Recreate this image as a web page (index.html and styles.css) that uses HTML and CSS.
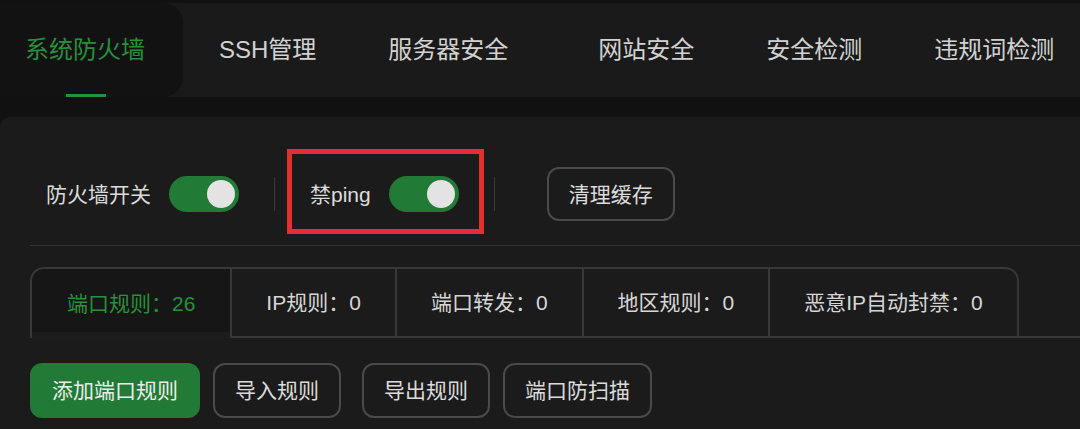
FILE: index.html
```html
<!DOCTYPE html>
<html lang="zh-CN">
<head>
<meta charset="utf-8">
<title>系统防火墙</title>
<link rel="stylesheet" href="styles.css">
</head>
<body>
<div class="page">
  <nav class="topnav">
    <div class="nav-list">
      <a class="nav-item active">系统防火墙</a>
      <a class="nav-item">SSH管理</a>
      <a class="nav-item">服务器安全</a>
      <a class="nav-item nav-item-spaced">网站安全</a>
      <a class="nav-item">安全检测</a>
      <a class="nav-item">违规词检测</a>
    </div>
  </nav>
  <main class="panel">
    <div class="switch-row">
      <div class="switch-group">
        <span class="switch-label">防火墙开关</span>
        <span class="toggle on"><span class="knob"></span></span>
      </div>
      <span class="sep"></span>
      <div class="switch-group highlighted">
        <span class="switch-label">禁ping</span>
        <span class="toggle on"><span class="knob"></span></span>
      </div>
      <span class="sep"></span>
      <button class="btn btn-cache">清理缓存</button>
    </div>

    <div class="tabs">
      <div class="tab active">端口规则：26</div>
      <div class="tab">IP规则：0</div>
      <div class="tab">端口转发：0</div>
      <div class="tab">地区规则：0</div>
      <div class="tab tab-last">恶意IP自动封禁：0</div>
      <div class="tabs-fill"></div>
    </div>

    <div class="actions">
      <button class="btn btn-primary">添加端口规则</button>
      <button class="btn">导入规则</button>
      <button class="btn btn-spaced">导出规则</button>
      <button class="btn">端口防扫描</button>
    </div>
  </main>
</div>
</body>
</html>
```

FILE: styles.css
```css
html, body {
  margin: 0;
  padding: 0;
  background: #111111;
}

body {
  width: 1080px;
  height: 429px;
  overflow: hidden;
  font-family: "Liberation Sans", "Noto Sans CJK SC", sans-serif;
  color: #d8d8d8;
}

.page {
  padding-top: 3px;
}

/* ---------- top navigation ---------- */
.topnav {
  height: 94px;
  background: #1a1a1a;
  overflow: hidden;
}

.nav-list {
  display: flex;
  height: 100%;
  margin-left: -11px;
}

.nav-item {
  position: relative;
  display: flex;
  align-items: center;
  padding: 0 36px;
  font-size: 24px;
  line-height: 1;
  color: #d2d2d2;
  white-space: nowrap;
}

.nav-item-spaced {
  margin-left: 18px;
}

.nav-item.active {
  background: #121212;
  color: #28903c;
  padding-right: 38px;
  border-radius: 0 20px 20px 0;
}

.nav-item.active::after {
  content: "";
  position: absolute;
  left: 50%;
  bottom: 0;
  width: 40px;
  height: 3px;
  margin-left: -20px;
  background: #28903c;
}

/* ---------- panel ---------- */
.panel {
  margin-top: 20px;
  min-height: 262px;
  background: #1b1b1b;
  border-top-left-radius: 10px;
  padding: 50px 0 0 30px;
}

.switch-row {
  display: flex;
  align-items: center;
  height: 54px;
  padding: 0 0 24px 16px;
  gap: 35px;
  border-bottom: 1px solid #363636;
}

.switch-group {
  position: relative;
  display: flex;
  align-items: center;
  gap: 18px;
}

.switch-label {
  font-size: 21px;
  line-height: 1;
  color: #dcdcdc;
  white-space: nowrap;
}

.highlighted::after {
  content: "";
  position: absolute;
  top: -27px;
  bottom: -22px;
  left: -23px;
  right: -25px;
  border: 5px solid #e2302a;
  pointer-events: none;
}

.toggle {
  display: flex;
  align-items: center;
  box-sizing: border-box;
  width: 70px;
  height: 36px;
  padding: 0 4px;
  border-radius: 18px;
  background: #555;
}

.toggle.on {
  background: #217a35;
  justify-content: flex-end;
}

.knob {
  width: 28px;
  height: 28px;
  border-radius: 50%;
  background: #e3e3e3;
}

.sep {
  width: 1px;
  height: 34px;
  background: #3a3a3a;
}

/* ---------- buttons ---------- */
.btn {
  box-sizing: border-box;
  height: 55px;
  padding: 0 20px;
  border: 2px solid #4a4a4a;
  border-radius: 12px;
  background: transparent;
  color: #dcdcdc;
  font-family: inherit;
  font-size: 21px;
  line-height: 1;
  white-space: nowrap;
}

.btn-cache {
  height: 54px;
  margin-left: 17px;
}

.btn-primary {
  background: #217a35;
  border-color: #217a35;
  color: #ececec;
}

.btn-spaced {
  margin-left: 8px;
}

/* ---------- tabs ---------- */
.tabs {
  display: flex;
  height: 71px;
  margin-top: 21px;
}

.tab {
  display: flex;
  align-items: center;
  box-sizing: border-box;
  padding: 0 34px;
  font-size: 21px;
  line-height: 1;
  color: #d6d6d6;
  white-space: nowrap;
  border-top: 2px solid #383838;
  border-right: 2px solid #383838;
  border-bottom: 2px solid #383838;
}

.tab:first-child {
  padding: 0 35px;
  border-left: 2px solid #383838;
  border-top-left-radius: 14px;
}

.tab.active {
  border-bottom: none;
  color: #28903c;
  background: linear-gradient(#161616 calc(100% - 6px), #1c1c1c 0);
}

.tab-last {
  border-top-right-radius: 14px;
}

.tabs-fill {
  flex: 1;
  border-bottom: 2px solid #383838;
}

/* ---------- actions ---------- */
.actions {
  display: flex;
  gap: 13px;
  margin-top: 25px;
}
```
